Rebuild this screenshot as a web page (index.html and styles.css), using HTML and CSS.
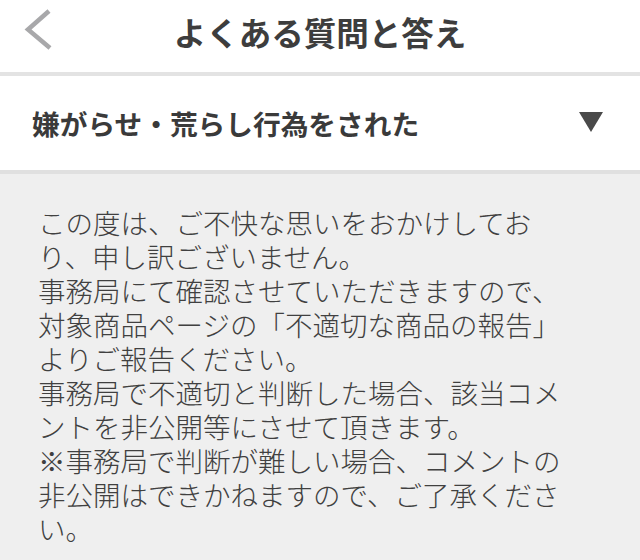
FILE: index.html
```html
<!DOCTYPE html>
<html>

<head>
	<meta charset="utf-8">
	<link rel="stylesheet" href="styles.css">
</head>

<body>
	<div class="header">
		<div class="back">
			<svg width="32" height="48" viewBox="0 0 32 48">
				<polyline points="25,5 4,23.5 26,42" fill="none" stroke="#a8a8aa" stroke-width="4.5" />
			</svg>
		</div>
		<h1 class="title">よくある質問と答え</h1>
		<div></div>
	</div>

	<div class="question">
		<h2>嫌がらせ・荒らし行為をされた</h2>
		<svg class="arrow" width="24" height="20" viewBox="0 0 24 20">
			<polygon points="0,0 24,0 12,20" fill="#4a4a4a" />
		</svg>
	</div>

	<div class="answer">
		<p>この度は、ご不快な思いをおかけしており、申し訳ございません。<br>事務局にて確認させていただきますので、対象商品ページの「不適切な商品の報告」よりご報告ください。<br>事務局で不適切と判断した場合、該当コメントを非公開等にさせて頂きます。<br>※事務局で判断が難しい場合、コメントの非公開はできかねますので、ご了承ください。</p>
	</div>
</body>

</html>
```

FILE: styles.css
```css
html,
body {
	margin: 0;
	padding: 0;
	background-color: #efefef;
	font-family: "Noto Sans CJK JP", "Noto Sans", sans-serif;
}

.header {
	display: grid;
	grid-template-columns: 1fr auto 1fr;
	align-items: start;
	height: 72px;
	background-color: #fff;
	border-bottom: 4px solid #e3e3e3;
}

.back {
	padding: 6px 0 0 24px;
}

.back svg {
	display: block;
}

.title {
	margin: 0;
	font-size: 32.5px;
	line-height: 64px;
	font-weight: bold;
	color: #3d3d3d;
}

.question {
	display: flex;
	align-items: center;
	justify-content: space-between;
	height: 94px;
	padding: 0 37px 0 32px;
	background-color: #fff;
	border-bottom: 4px solid #e0e0e0;
}

.question h2 {
	margin: 0;
	font-size: 27.7px;
	line-height: 34px;
	font-weight: bold;
	color: #3a3a3a;
}

.arrow {
	display: block;
	margin-top: -3px;
}

.answer {
	padding: 31px 0 20px 38px;
}

.answer p {
	margin: 0;
	width: 530px;
	font-size: 27.5px;
	line-height: 34px;
	font-weight: 300;
	color: #404040;
}
```
